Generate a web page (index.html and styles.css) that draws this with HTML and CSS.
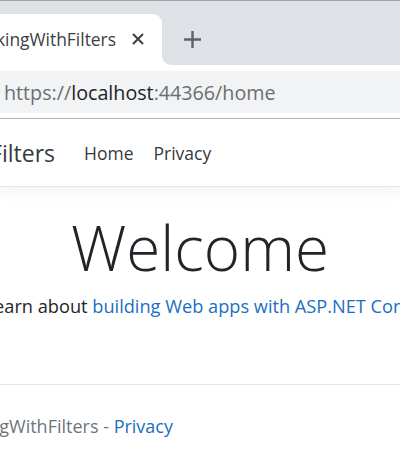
FILE: index.html
```html
<!DOCTYPE html>
<html lang="en">
<head>
<meta charset="utf-8">
<title>Home Page - WorkingWithFilters</title>
<link rel="stylesheet" href="styles.css">
</head>
<body>
<div class="chrome">
  <div class="tabstrip">
    <div class="tab">
      <span class="tab-title">Home Page - WorkingWithFilters</span>
      <svg class="tab-close" width="12" height="12" viewBox="0 0 12 12"><path d="M1 1L11 11M11 1L1 11" stroke="#3c4043" stroke-width="2" fill="none"/></svg>
    </div>
    <div class="newtab">
      <svg width="19" height="19" viewBox="0 0 19 19"><path d="M9.5 1V18M1 9.5H18" stroke="#5f6368" stroke-width="2.4" fill="none"/></svg>
    </div>
  </div>
  <div class="toolbar">
    <div class="omnibox"><span class="dim">https://</span><span class="host">localhost</span><span class="dim">:44366/home</span></div>
  </div>
</div>
<header class="navbar">
  <div class="brand-box"><a class="brand">WorkingWithFilters</a></div>
  <nav class="nav">
    <a class="nav-link">Home</a>
    <a class="nav-link">Privacy</a>
  </nav>
</header>
<main class="main">
  <h1 class="display">Welcome</h1>
  <p class="lead-line">Learn about <a class="link">building Web apps with ASP.NET Core</a>.</p>
</main>
<footer class="footer">
  <div class="footer-box"><span>&copy; 2020 - WorkingWithFilters - <a class="link">Privacy</a></span></div>
</footer>
</body>
</html>
```

FILE: styles.css
```css
* { box-sizing: border-box; }
html, body { margin: 0; padding: 0; }
body {
  width: 400px;
  height: 464px;
  overflow: hidden;
  background: #fff;
  font-family: "Open Sans", "Noto Sans", sans-serif;
  color: #212529;
}
.chrome { width: 400px; }
.tabstrip {
  height: 65px;
  background: #dee1e6;
  border-top: 1px solid #a3a3a3;
  display: flex;
  align-items: flex-end;
}
.tab {
  position: relative;
  width: 162px;
  height: 51px;
  background: #fff;
  border-radius: 0 9px 0 0;
  display: flex;
  align-items: center;
  justify-content: flex-end;
  gap: 16px;
  padding: 0 18px 2px 0;
  white-space: nowrap;
}
.tab::after {
  content: "";
  position: absolute;
  right: -9px;
  bottom: 0;
  width: 9px;
  height: 9px;
  background: radial-gradient(circle at 100% 0, transparent 8.5px, #fff 9px);
}
.tab-title {
  font-size: 17.4px;
  color: #3c4043;
  flex-shrink: 0;
}
.tab-close { flex-shrink: 0; }
.newtab {
  width: 40px;
  height: 51px;
  margin-left: 10px;
  display: flex;
  align-items: center;
  justify-content: center;
  padding-bottom: 0;
}
.toolbar {
  height: 54px;
  background: #fff;
  padding: 6px 0 5px 0;
  border-bottom: 1px solid #b5b5b5;
}
.omnibox {
  height: 42px;
  background: #f1f3f4;
  display: flex;
  align-items: center;
  padding-left: 4px;
  font-size: 19.7px;
  white-space: nowrap;
}
.dim { color: #6b6e72; }
.host { color: #202124; }
.navbar {
  height: 68px;
  display: flex;
  align-items: center;
  border-bottom: 1px solid #e5e5e5;
  box-shadow: 0 5px 15px rgba(0,0,0,.05);
  padding-top: 1px;
}
.brand-box {
  width: 55px;
  display: flex;
  justify-content: flex-end;
  white-space: nowrap;
  margin-right: 19px;
}
.brand {
  font-size: 23px;
  color: #343a40;
  flex-shrink: 0;
}
.nav { display: flex; }
.nav-link {
  font-size: 17.5px;
  color: #343a40;
  padding: 0 10px;
}
.main {
  display: flex;
  flex-direction: column;
  align-items: center;
  padding-top: 23px;
}
.display {
  margin: 0;
  font-size: 62px;
  font-weight: 300;
  line-height: 1.2;
  color: #212529;
}
.lead-line {
  margin: 9px 0 0 0;
  font-size: 18.2px;
  white-space: nowrap;
  line-height: 1.5;
}
.link { color: #1b6ec2; text-decoration: none; }
.footer {
  margin-top: 63px;
  border-top: 1px solid #e5e5e5;
  height: 84px;
  display: flex;
  align-items: center;
}
.footer-box {
  width: 173px;
  display: flex;
  justify-content: flex-end;
  white-space: nowrap;
  font-size: 18px;
  color: #6c757d;
}
.footer-box span { flex-shrink: 0; }
```
